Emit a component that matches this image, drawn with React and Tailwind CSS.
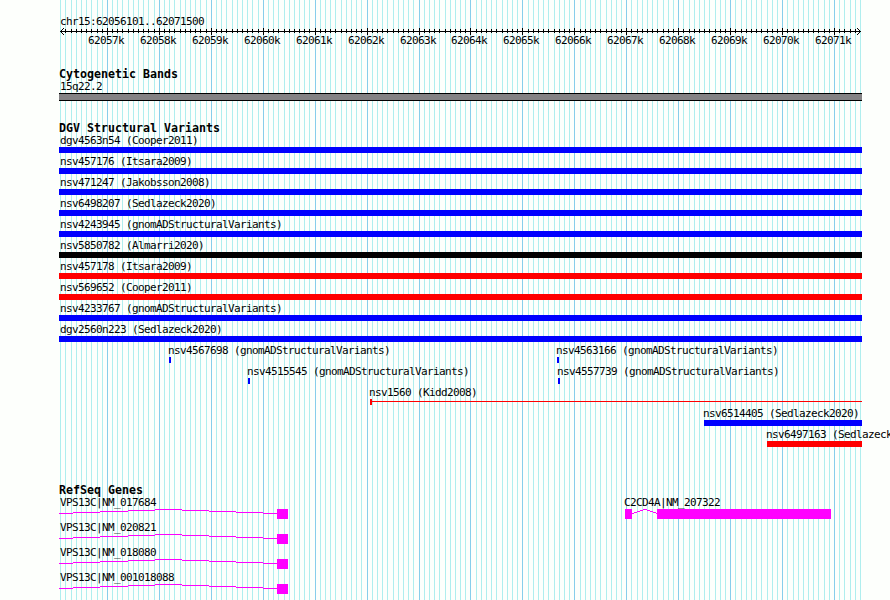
const START = 62056101;
const LEFT = 60.71;
const SCALE = 0.05194;

const toX = (bp) => Math.floor(LEFT + (bp - START) * SCALE);

// one tick every 100 bp, a major one every 1000 bp
const ticks = Array.from({ length: 155 }, (_, i) => {
  const bp = 62056100 + i * 100;
  return { bp, x: toX(bp), major: bp % 1000 === 0 };
});
const majors = ticks.filter((t) => t.major);

const wideVariants = [
  { name: 'dgv4563n54 (Cooper2011)', color: 'bg-[#0000ff]' },
  { name: 'nsv457176 (Itsara2009)', color: 'bg-[#0000ff]' },
  { name: 'nsv471247 (Jakobsson2008)', color: 'bg-[#0000ff]' },
  { name: 'nsv6498207 (Sedlazeck2020)', color: 'bg-[#0000ff]' },
  { name: 'nsv4243945 (gnomADStructuralVariants)', color: 'bg-[#0000ff]' },
  { name: 'nsv5850782 (Almarri2020)', color: 'bg-black' },
  { name: 'nsv457178 (Itsara2009)', color: 'bg-[#ff0000]' },
  { name: 'nsv569652 (Cooper2011)', color: 'bg-[#ff0000]' },
  { name: 'nsv4233767 (gnomADStructuralVariants)', color: 'bg-[#0000ff]' },
  { name: 'dgv2560n223 (Sedlazeck2020)', color: 'bg-[#0000ff]' },
];

const transcripts = ['NM_017684', 'NM_020821', 'NM_018080', 'NM_001018088'];

function Grid() {
  return (
    <svg className="absolute inset-0" width="890" height="600" shapeRendering="crispEdges">
      {ticks.map((t) => (
        <rect key={t.bp} x={t.x} y="0" width="1" height="600" fill={t.major ? '#87ceeb' : '#afeeee'} />
      ))}
    </svg>
  );
}

function Ruler() {
  return (
    <svg className="block" width="890" height="7" shapeRendering="crispEdges">
      <rect x="60" y="3" width="801" height="1" />
      {ticks.slice(1, -1).map((t) => (
        <rect key={t.bp} x={t.x} y={t.major ? 0 : 1} width="1" height={t.major ? 7 : 4} />
      ))}
      <path d="M61 2h1v1h-1zM62 1h1v1h-1zM63 0h1v1h-1zM61 4h1v1h-1zM62 5h1v1h-1zM63 6h1v1h-1z" />
      <path d="M859 2h1v1h-1zM858 1h1v1h-1zM857 0h1v1h-1zM859 4h1v1h-1zM858 5h1v1h-1zM857 6h1v1h-1z" />
    </svg>
  );
}

function Title({ children }) {
  return <h2 className="pl-[59px] h-[13px] text-[11.63px] leading-3 font-bold whitespace-pre">{children}</h2>;
}

function Label({ children }) {
  return <p className="h-3 text-[11px] leading-3 tracking-[-0.622px] whitespace-pre">{children}</p>;
}

function Variant({ name, bar }) {
  return (
    <div className="h-[21px] w-0">
      <Label>{name}</Label>
      <div className={`-ml-px h-1.5 ${bar}`}></div>
    </div>
  );
}

function Transcript({ id }) {
  return (
    <div className="h-[25px]">
      <div className="pl-[60px]">
        <Label>VPS13C|{id}</Label>
      </div>
      <svg className="block ml-[59px]" width="229" height="10" fill="#ff00ff" shapeRendering="crispEdges">
        <path d="M0 4h14v1H0zM14 3h27v1H14zM41 2h28v1H41zM69 1h27v1H69zM96 0h27v1H96zM123 1h27v1h-27zM150 2h27v1h-27zM177 3h27v1h-27zM204 4h14v1h-14z" />
        <rect x="218" width="11" height="10" />
      </svg>
    </div>
  );
}

export default function App() {
  return (
    <div className="relative w-[890px] h-[600px] overflow-hidden bg-[#fdfffc] text-black font-['DejaVu_Sans_Mono',monospace]">
      <Grid />
      <div className="relative flex flex-col">
        <header className="pt-4 h-[68px]">
          <div className="pl-[60px]">
            <Label>chr15:62056101..62071500</Label>
          </div>
          <Ruler />
          <div className="flex pl-[88px]">
            {majors.map((t, i) => (
              <div
                key={t.bp}
                className="shrink-0"
                style={{ width: i < majors.length - 1 ? majors[i + 1].x - t.x : 40 }}
              >
                <Label>{t.bp / 1000}k</Label>
              </div>
            ))}
          </div>
        </header>

        <section className="h-[54px]">
          <Title>Cytogenetic Bands</Title>
          <div className="pl-[60px]">
            <Label>15q22.2</Label>
          </div>
          <div className="ml-[59px] w-[803px] h-2 bg-[#848284] border-y border-black"></div>
        </section>

        <section className="h-[362px]">
          <Title>DGV Structural Variants</Title>
          {wideVariants.map((v) => (
            <div key={v.name} className="pl-[60px]">
              <Variant name={v.name} bar={`w-[803px] ${v.color}`} />
            </div>
          ))}
          <div className="flex pl-[168px] gap-[388px]">
            <Variant name="nsv4567698 (gnomADStructuralVariants)" bar="w-0.5 translate-x-0.5 bg-[#0000ff]" />
            <Variant name="nsv4563166 (gnomADStructuralVariants)" bar="w-0.5 translate-x-0.5 bg-[#0000ff]" />
          </div>
          <div className="flex pl-[247px] gap-[310px]">
            <Variant name="nsv4515545 (gnomADStructuralVariants)" bar="w-0.5 translate-x-0.5 bg-[#0000ff]" />
            <Variant name="nsv4557739 (gnomADStructuralVariants)" bar="w-0.5 translate-x-0.5 bg-[#0000ff]" />
          </div>
          <div className="pl-[369px] h-[21px]">
            <Label>nsv1560 (Kidd2008)</Label>
            <svg className="block ml-px" width="492" height="6" fill="#ff0000" shapeRendering="crispEdges">
              <rect width="2" height="6" />
              <rect y="2" width="492" height="1" />
            </svg>
          </div>
          <div className="pl-[703px]">
            <Variant name="nsv6514405 (Sedlazeck2020)" bar="w-[158px] translate-x-0.5 bg-[#0000ff]" />
          </div>
          <div className="pl-[766px]">
            <Variant name="nsv6497163 (Sedlazeck2020)" bar="w-[95px] translate-x-0.5 bg-[#ff0000]" />
          </div>
        </section>

        <section>
          <Title>RefSeq Genes</Title>
          <div className="flex">
            <div className="w-[624px]">
              {transcripts.map((id) => (
                <Transcript key={id} id={id} />
              ))}
            </div>
            <div>
              <Label>C2CD4A|NM_207322</Label>
              <svg className="block ml-px" width="206" height="10" fill="#ff00ff" shapeRendering="crispEdges">
                <rect width="7" height="10" />
                <path d="M7 4h2v1H7zM9 3h3v1H9zM12 2h3v1h-3zM15 1h3v1h-3zM18 0h4v1h-4zM22 1h3v1h-3zM25 2h3v1h-3zM28 3h3v1h-3zM31 4h2v1h-2z" />
                <rect x="32" width="174" height="10" />
              </svg>
            </div>
          </div>
        </section>
      </div>
    </div>
  );
}
